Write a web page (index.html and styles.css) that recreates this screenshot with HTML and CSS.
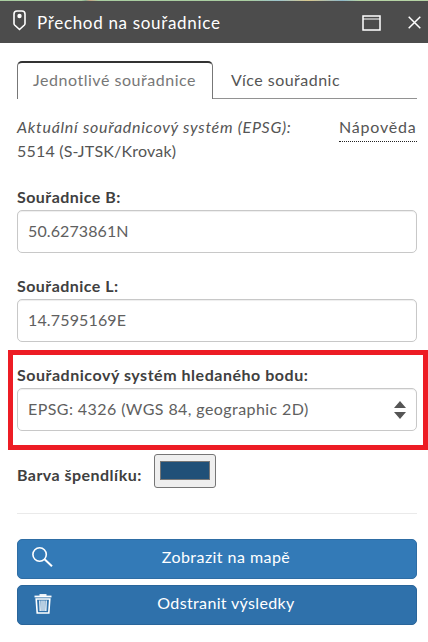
FILE: index.html
```html
<!DOCTYPE html>
<html lang="cs">
<head>
<meta charset="utf-8">
<title>Přechod na souřadnice</title>
<link rel="stylesheet" href="styles.css">
</head>
<body>
<div class="map-strip"></div>
<header class="titlebar">
  <svg class="pin" width="13" height="21" viewBox="0 0 13 21" fill="none" stroke="#fff" stroke-width="1.6"><path d="M4 1h5q3 0 3 3v9.600q0 .8-.6 1.4L6.500 19.500 1.600 15q-.6-.6-.6-1.400V4q0-3 3-3z"/><circle cx="6.500" cy="6" r="2.200" fill="#fff" stroke="none"/></svg>
  <h1><span class="t-title">Přechod na souřadnice</span></h1>
  <svg class="maximize" width="19" height="16" viewBox="0 0 19 16" fill="none" stroke="#fff"><path d="M1 1h17v14H1z" stroke-width="1.500"/><path d="M1 4h17"/></svg>
  <svg class="close" width="13" height="13" viewBox="0 0 13 13" fill="none" stroke="#fff" stroke-width="1.500"><path d="M.7.700l11.600 11.600M12.300.700L.7 12.300"/></svg>
</header>
<main>
  <nav class="tabs">
    <div class="tab active"><span class="t-tab1">Jednotlivé souřadnice</span></div>
    <div class="tab"><span class="t-tab2">Více souřadnic</span></div>
  </nav>
  <section class="info">
    <div><em class="t-info">Aktuální souřadnicový systém (EPSG):</em><br><span class="t-code">5514 (S-JTSK/Krovak)</span></div>
    <a class="help"><span class="t-help">Nápověda</span></a>
  </section>
  <div class="field">
    <label><span class="t-b">Souřadnice B:</span></label>
    <div class="control"><span class="t-vb">50.6273861N</span></div>
  </div>
  <div class="field">
    <label><span class="t-l">Souřadnice L:</span></label>
    <div class="control"><span class="t-vl">14.7595169E</span></div>
  </div>
  <div class="field highlighted">
    <label><span class="t-sys">Souřadnicový systém hledaného bodu:</span></label>
    <div class="control"><span class="t-vsys">EPSG: 4326 (WGS 84, geographic 2D)</span>
      <svg width="12" height="18" viewBox="0 0 12 18" fill="#555"><path d="M6 0l6 7H0zM0 11h12l-6 7z"/></svg>
    </div>
  </div>
  <div class="color-row">
    <label><span class="t-color">Barva špendlíku:</span></label>
    <div class="color-box"><div class="swatch"></div></div>
  </div>
  <hr>
  <div class="button">
    <svg class="search" width="21" height="20" viewBox="0 0 21 20" fill="none" stroke="#fff" stroke-width="1.600"><circle cx="7.600" cy="7.500" r="6.700"/><path d="M12.300 12.100l7.700 7.200" stroke-width="2"/></svg>
    <span class="t-show">Zobrazit na mapě</span>
  </div>
  <div class="button second">
    <svg class="trash" width="18" height="20" viewBox="0 0 18 20" fill="none" stroke="#fff"><path d="M.5 2.500h17" stroke-width="1.800"/><path d="M5.500 1h7" stroke-width="1.800"/><path d="M2.200 5h13.600l-1 14H3.200z" stroke-width="1.600"/><path d="M5.800 6.500l.4 10.500M8 6.500V17M10 6.500V17M12.200 6.500l-.4 10.500" stroke-width="1.300"/></svg>
    <span class="t-remove">Odstranit výsledky</span>
  </div>
</main>
</body>
</html>
```
FILE: styles.css
```css
*, *::after { box-sizing: border-box; }
body { margin: 0; height: 642px; overflow: hidden; background: #fff; color: #555; font: 16px/24px Lato, "Open Sans", sans-serif; }
span, em { white-space: nowrap; }
svg { display: block; flex: none; }
.map-strip { height: 1px; background: linear-gradient(90deg, #a9cda0 0 19%, #87a98b 20%, #c5a181 21%, #a9cda0 23% 58%, #9cc4cc 65%, #d8c78d 72%, #8db7c8 80%, #b5d3a4 84%); }
.titlebar { height: 42px; background: #4c4c4c; color: #fff; display: flex; align-items: flex-start; padding-left: 13px; }
.pin { margin-top: 9px; }
h1 { margin: 10px 0 0 11px; font-size: 17px; line-height: 24px; font-weight: 400; width: 325px; }
.maximize { margin-top: 14px; }
.close { margin: 15px 0 0 27px; }
main { width: 100%; padding: 18px 11px 0 17px; }
.tabs { display: flex; height: 38px; }
.tab { flex: 1; padding: 7px 0 0 18px; border-bottom: 1px solid #929292; }
.tab.active { flex: 0 0 196px; padding: 5px 0 0 15px; color: #777; border: 1px solid #777; border-top: 2px solid #333; border-bottom: 0; border-radius: 5px 5px 0 0; }
.info { display: flex; justify-content: space-between; height: 86px; padding-top: 16px; }
.help { height: 27px; border-bottom: 1px dotted #222; width: 78px; }
.field { height: 89px; }
label { display: block; font-weight: 700; color: #404040; height: 25px; }
.control { height: 43px; border: 1px solid #c8c8c8; border-radius: 5px; padding: 8px 10px; display: flex; justify-content: space-between; box-shadow: inset 0 1px 1px #00000012; color: #606060; }
.control svg { margin-top: 4px; margin-right: 0; }
.highlighted { position: relative; }
.highlighted::after { content: ""; position: absolute; left: -9px; top: -13px; width: 420px; height: 100px; border: 5px solid #ed1c24; }
.color-row { display: flex; height: 61px; padding-top: 2px; }
.color-row label { width: 137px; padding-top: 9px; }
.color-box { width: 62px; height: 34px; border: 1px solid #767676; border-radius: 3px; background: #efefef; padding: 6px 5px; }
.swatch { height: 19px; background: #205078; border: 1px solid #777; }
hr { height: 1px; border: 0; background: #eaeaea; margin: 0 0 25px; }
.button { display: grid; grid-template-columns: 1fr; height: 40px; border: 1px solid #2e6da4; border-radius: 5px; background: #337ab7; color: #fff; margin-bottom: 6px; }
.button > * { grid-area: 1 / 1; }
.button span { justify-self: center; padding: 5px 0 0 18px; }
.button svg { margin: 7px 0 0 14px; }
.button .trash { margin: 8px 0 0 16px; }
.second { background: #2f71ab; border-color: #2a659a; }
.t-title { letter-spacing: .68px; }
.t-tab1 { letter-spacing: .53px; }
.t-tab2 { letter-spacing: .48px; }
.t-info { letter-spacing: .71px; }
.t-code { letter-spacing: .2px; }
.t-help { letter-spacing: .8px; }
.t-b, .t-l { letter-spacing: .46px; }
.t-vb { letter-spacing: .1px; }
.t-vl { letter-spacing: .15px; }
.t-sys { letter-spacing: .53px; }
.t-vsys { letter-spacing: .42px; }
.t-color { letter-spacing: .45px; }
.t-show { letter-spacing: .45px; }
.t-remove { letter-spacing: .35px; }
```
